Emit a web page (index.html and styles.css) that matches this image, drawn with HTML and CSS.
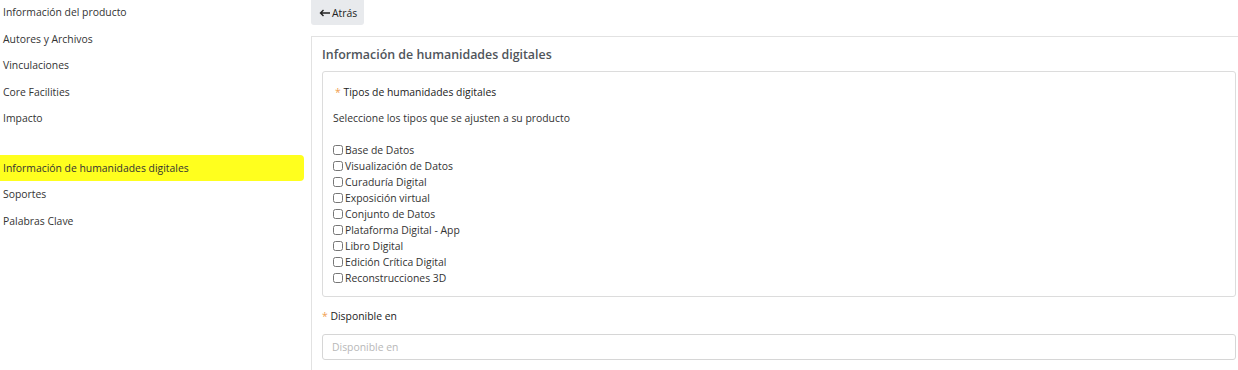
FILE: index.html
```html
<!DOCTYPE html>
<html lang="es">
<head>
    <meta charset="UTF-8">
    <meta name="viewport" content="width=device-width, initial-scale=1.0">
    <title>Humanidades digitales</title>
    <link rel="stylesheet" href="styles.css">
</head>
<body>
    <div class="layout">
        <nav class="sidebar">
            <div class="nav-item">Información del producto</div>
            <div class="nav-item">Autores y Archivos</div>
            <div class="nav-item">Vinculaciones</div>
            <div class="nav-item">Core Facilities</div>
            <div class="nav-item">Impacto</div>
            <div class="nav-spacer"></div>
            <div class="nav-item active">Información de humanidades digitales</div>
            <div class="nav-item">Soportes</div>
            <div class="nav-item">Palabras Clave</div>
        </nav>

        <main class="main">
            <button class="btn-back">
                <svg class="arrow" width="11" height="8" viewBox="0 0 11 8"><path d="M11 4H2M4.5 1L1.5 4l3 3" fill="none" stroke="#222" stroke-width="1.4"/></svg>
                Atrás
            </button>

            <section class="card">
                <h2 class="card-title">Información de humanidades digitales</h2>

                <div class="group-box">
                    <div class="field-label"><span class="req">*</span> Tipos de humanidades digitales</div>
                    <p class="hint">Seleccione los tipos que se ajusten a su producto</p>

                    <div class="check-list">
                        <label class="check"><input type="checkbox"> Base de Datos</label>
                        <label class="check"><input type="checkbox"> Visualización de Datos</label>
                        <label class="check"><input type="checkbox"> Curaduría Digital</label>
                        <label class="check"><input type="checkbox"> Exposición virtual</label>
                        <label class="check"><input type="checkbox"> Conjunto de Datos</label>
                        <label class="check"><input type="checkbox"> Plataforma Digital - App</label>
                        <label class="check"><input type="checkbox"> Libro Digital</label>
                        <label class="check"><input type="checkbox"> Edición Crítica Digital</label>
                        <label class="check"><input type="checkbox"> Reconstrucciones 3D</label>
                    </div>
                </div>

                <div class="field">
                    <div class="field-label outer"><span class="req">*</span> Disponible en</div>
                    <input class="text-input" type="text" placeholder="Disponible en">
                </div>
            </section>
        </main>
    </div>
</body>
</html>
```

FILE: styles.css
```css
body {
    margin: 0;
    padding: 0;
    font-family: 'Open Sans', 'Noto Sans', sans-serif;
    font-size: 10.4px;
    color: #333;
    background: #fff;
    overflow: hidden;
}

.layout {
    display: flex;
    gap: 7px;
    height: 370px;
}

/* Left menu */
.sidebar {
    width: 304px;
    flex-shrink: 0;
    margin-top: -1px;
}

.nav-item {
    height: 26.6px;
    line-height: 26.6px;
    padding: 0 3px;
    color: #333;
    white-space: nowrap;
}

.nav-spacer {
    height: 22.7px;
}

.nav-item.active {
    background: #ffff1e;
    border-radius: 0 4px 4px 0;
}

/* Main area */
.main {
    flex: 1;
    display: flex;
    flex-direction: column;
    align-items: flex-start;
}

.btn-back {
    display: flex;
    align-items: center;
    gap: 2px;
    height: 25px;
    padding: 0 7px 0 8px;
    margin: 0;
    border: none;
    border-radius: 0 0 3px 3px;
    background: #e8eaed;
    color: #222;
    font-family: inherit;
    font-size: 10.4px;
    cursor: pointer;
}

.card {
    align-self: stretch;
    margin-top: 11px;
    padding: 8px 2px 0 10px;
    border-top: 1px solid #e2e2e2;
    border-left: 1px solid #e2e2e2;
    flex: 1;
}

.card-title {
    margin: 0 0 6px;
    font-size: 12.4px;
    font-weight: 600;
    line-height: 20px;
    color: #50555b;
}

.group-box {
    border: 1px solid #dcdcdc;
    border-radius: 3px;
    padding: 12px 10px 10px;
}

.field-label {
    line-height: 16px;
    color: #222;
    padding-left: 2px;
}

.field-label.outer {
    padding-left: 0;
}

.req {
    color: #f0a050;
}

.hint {
    margin: 10px 0 0;
    line-height: 16px;
    color: #333;
}

.check-list {
    margin-top: 16px;
    display: flex;
    flex-direction: column;
}

.check {
    display: flex;
    align-items: center;
    height: 16px;
    line-height: 16px;
    color: #333;
}

.check input {
    width: 10px;
    height: 10px;
    margin: 0 2px 0 0;
}

.field {
    padding-top: 11px;
}

.text-input {
    display: block;
    box-sizing: border-box;
    width: 100%;
    height: 26px;
    margin-top: 10px;
    padding: 0 9px;
    border: 1px solid #d6d6d6;
    border-radius: 3px;
    font-family: inherit;
    font-size: 10.4px;
    color: #333;
}

.text-input::placeholder {
    color: #b8b8b8;
}
```
